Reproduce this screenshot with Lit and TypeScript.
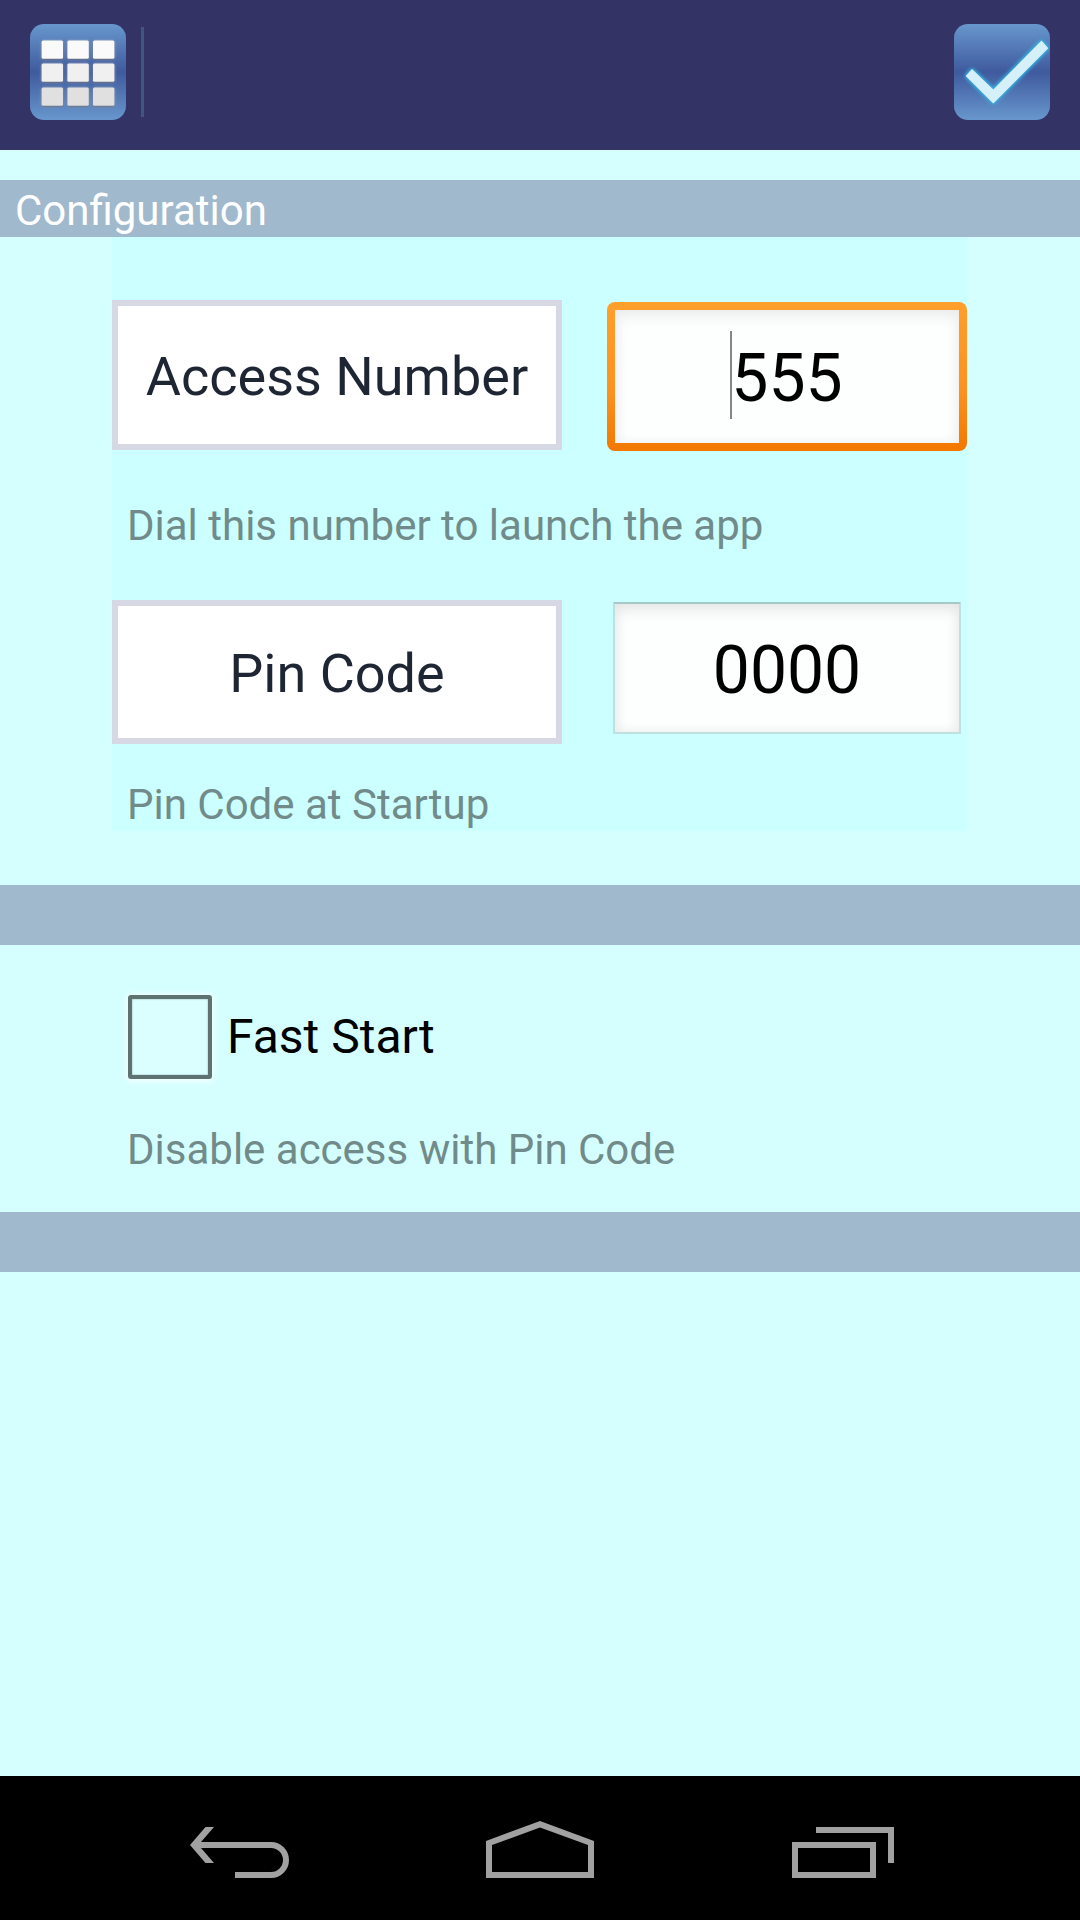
import { LitElement, html, css, svg } from "lit";
import { customElement, property, state } from "lit/decorators.js";

/** Glossy blue square used for the actions of the title bar. */
@customElement("header-action")
class HeaderAction extends LitElement {
  @property() label = "";
  @property() icon: "grid" | "check" = "grid";

  static styles = css`
    :host {
      display: block;
    }
    .action {
      display: block;
      width: 96px;
      height: 96px;
      padding: 0;
      border: 0;
      border-radius: 14px;
      background: linear-gradient(#6897cd, #3f5a9e 50%, #6897cd);
      cursor: pointer;
    }
    .icon {
      display: block;
      width: 96px;
      height: 96px;
    }
    .cell {
      filter: drop-shadow(0 1px 1px rgba(70, 70, 80, 0.7)) drop-shadow(0 0 1px rgba(220, 225, 235, 0.6));
    }
    .tick {
      fill: #d6f0fa;
      filter: drop-shadow(0 0 2px #35b5e5) drop-shadow(0 0 1px #35b5e5);
    }
  `;

  private grid() {
    const columns = [11.6, 37.4, 63];
    const rows = [
      { y: 16.4, fill: "#fafafa" },
      { y: 39.4, fill: "#f0f0f0" },
      { y: 63.4, fill: "#e0e0e0" },
    ];
    return rows.map((row) =>
      columns.map(
        (x) => svg`<rect class="cell" x=${x} y=${row.y} width="21.4" height="18.4" rx="1.5" fill=${row.fill} />`
      )
    );
  }

  render() {
    return html`
      <button class="action" type="button" aria-label=${this.label}>
        <svg class="icon" viewBox="0 0 96 96" aria-hidden="true">
          ${this.icon === "grid"
            ? this.grid()
            : svg`<path class="tick" d="M18 45 L11.7 52 L39.3 79.5 L94.3 24.3 L87.5 16.5 L39.3 65.5 Z" />`}
        </svg>
      </button>
    `;
  }
}

/** Row of the three system keys: back, home, recent apps. */
@customElement("system-keys")
class SystemKeys extends LitElement {
  static styles = css`
    :host {
      display: block;
      background: #000;
    }
    .keys {
      display: flex;
      padding: 0 87px;
    }
    .key {
      flex: 1;
      display: flex;
      align-items: center;
      justify-content: center;
      height: 144px;
      padding: 0;
      border: 0;
      background: none;
      cursor: pointer;
    }
    .glyph {
      display: block;
      width: 108px;
      height: 60px;
      fill: #a1a1a1;
    }
    .line {
      fill: none;
      stroke: #a1a1a1;
      stroke-width: 6;
    }
  `;

  render() {
    return html`
      <nav class="keys" aria-label="System">
        <button class="key" type="button" aria-label="Back">
          <svg class="glyph" viewBox="0 0 108 60" aria-hidden="true">
            <path d="M6 27 L21.5 9 H30 L17 24 V30 L30 45 H21.5 Z" />
            <path class="line" d="M14 27 H87 A15 15 0 0 1 87 57 H51" />
          </svg>
        </button>
        <button class="key" type="button" aria-label="Home">
          <svg class="glyph" viewBox="0 0 108 60" aria-hidden="true">
            <path fill-rule="evenodd" d="M0 23 L54 3 L108 23 V60 H0 Z M6 27 V54 H102 V27 L54 9.5 Z" />
          </svg>
        </button>
        <button class="key" type="button" aria-label="Recent apps">
          <svg class="glyph" viewBox="0 0 108 60" aria-hidden="true">
            <rect class="line" x="7" y="27" width="78" height="30" />
            <path class="line" d="M28 12 H103 V45" />
          </svg>
        </button>
      </nav>
    `;
  }
}

@customElement("app-root")
class AppRoot extends LitElement {
  @state() private accessNumber = "555";
  @state() private pinCode = "0000";
  @state() private fastStart = false;

  static styles = css`
    :host {
      display: flex;
      flex-direction: column;
      min-height: 100vh;
      background: #d5ffff;
      color: #000;
      font-family: Roboto, "Noto Sans", sans-serif;
    }
    .titlebar {
      display: flex;
      align-items: center;
      gap: 15px;
      padding: 24px 30px 30px;
      background: #333366;
    }
    .divider {
      width: 3px;
      height: 90px;
      margin-right: auto;
      background: #41567f;
    }
    .content {
      flex: 1;
      padding-top: 30px;
    }
    .band {
      height: 60px;
      background: #a0b9cd;
    }
    .heading {
      margin: 0;
      padding: 4px 15px 0;
      background: #a0b9cd;
      color: #fff;
      font-size: 42px;
      font-weight: 400;
      line-height: 53px;
    }
    .panel {
      margin: 0 113px 54px 112px;
      padding-top: 63px;
      background: #ccffff;
    }
    .field {
      display: grid;
      grid-template-columns: minmax(0, 5fr) minmax(0, 4fr);
      column-gap: 45px;
    }
    .name {
      display: flex;
      align-items: center;
      justify-content: center;
      box-sizing: border-box;
      min-height: 144px;
      padding-top: 4px;
      border: 6px solid #d6d9e4;
      background: #fff;
      color: #1e2533;
      font-size: 54px;
      line-height: 64px;
      text-align: center;
    }
    .name.tall {
      min-height: 150px;
    }
    .entry {
      position: relative;
      display: flex;
      min-width: 0;
    }
    .value {
      flex: 1;
      min-width: 0;
      box-sizing: border-box;
      padding: 4px 0 0;
      border: 0;
      outline: 0;
      background: #fdfefe;
      color: #000;
      font: inherit;
      font-size: 66px;
      text-align: center;
    }
    .plain {
      margin: 2px 6px 10px;
      border: 2px solid #bfe0e0;
      border-top-color: #a5c8c8;
      box-shadow: inset 0 6px 16px -2px #e2e4e4, inset 0 0 12px #f0f2f2;
    }
    .ring {
      flex: 1;
      min-width: 0;
      display: flex;
      margin: 2px 0 -1px;
      padding: 8px;
      border-radius: 8px;
      background: linear-gradient(#ff9f2c, #fb921f 60%, #f27800);
    }
    .ring .value {
      box-shadow: inset 0 6px 16px -2px #e8eaea, inset 0 0 12px #f2f4f4;
    }
    .caret {
      position: absolute;
      top: 31px;
      left: calc(50% - 57px);
      width: 2px;
      height: 88px;
      background: #858787;
    }
    .caption {
      margin: 0;
      padding: 4px 15px 0;
      color: #708b8a;
      font-size: 42px;
      line-height: 53px;
    }
    .first {
      margin: 45px 0 48px;
    }
    .second {
      margin-top: 30px;
    }
    .startup {
      padding: 50px 112px 36px;
    }
    .option {
      display: flex;
      align-items: center;
      gap: 15px;
      padding: 0 16px;
      font-size: 48px;
      line-height: 56px;
    }
    .box {
      appearance: none;
      flex: none;
      width: 84px;
      height: 84px;
      margin: 0;
      border: 4px solid #5f7272;
      border-radius: 3px;
      background: #dbffff;
      box-shadow: 0 1px 5px 2px #f2ffff, inset 0 0 2px #8fa8a8;
    }
    .box:checked {
      background: #35b5e5;
    }
    .third {
      margin-top: 40px;
    }
  `;

  render() {
    return html`
      <header class="titlebar">
        <header-action icon="grid" label="Menu"></header-action>
        <span class="divider"></span>
        <header-action icon="check" label="Save"></header-action>
      </header>

      <main class="content">
        <h1 class="heading">Configuration</h1>

        <section class="panel">
          <div class="field">
            <label class="name tall" for="access">Access Number</label>
            <div class="entry">
              <div class="ring">
                <input
                  class="value"
                  id="access"
                  type="text"
                  inputmode="numeric"
                  aria-describedby="access-help"
                  .value=${this.accessNumber}
                  @input=${(e: Event) => (this.accessNumber = (e.target as HTMLInputElement).value)}
                />
              </div>
              <span class="caret"></span>
            </div>
          </div>
          <p class="caption first" id="access-help">Dial this number to launch the app</p>

          <div class="field">
            <label class="name" for="pin">Pin Code</label>
            <div class="entry">
              <input
                class="value plain"
                id="pin"
                type="text"
                inputmode="numeric"
                aria-describedby="pin-help"
                .value=${this.pinCode}
                @input=${(e: Event) => (this.pinCode = (e.target as HTMLInputElement).value)}
              />
            </div>
          </div>
          <p class="caption second" id="pin-help">Pin Code at Startup</p>
        </section>

        <div class="band"></div>

        <section class="startup">
          <div class="option">
            <input
              class="box"
              id="fast"
              type="checkbox"
              aria-describedby="fast-help"
              .checked=${this.fastStart}
              @change=${(e: Event) => (this.fastStart = (e.target as HTMLInputElement).checked)}
            />
            <label for="fast">Fast Start</label>
          </div>
          <p class="caption third" id="fast-help">Disable access with Pin Code</p>
        </section>

        <div class="band"></div>
      </main>

      <system-keys></system-keys>
    `;
  }
}
